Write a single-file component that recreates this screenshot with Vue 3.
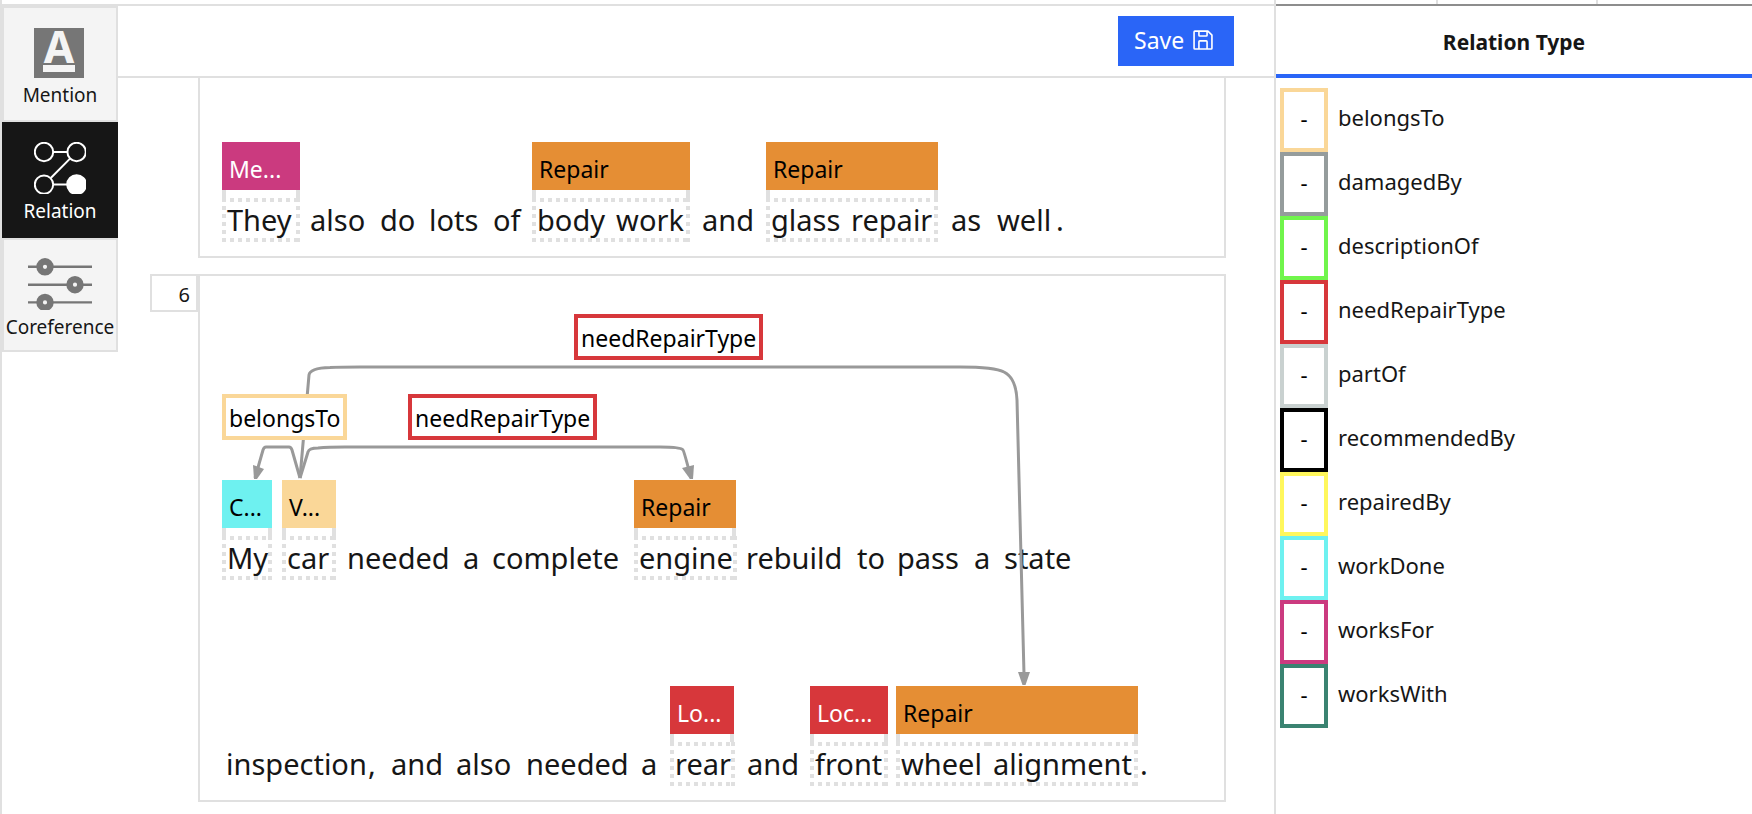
<script setup>
import { ref } from 'vue'

const mode = ref('Relation')
const modes = ['Mention', 'Relation', 'Coreference']

const relationTypes = [
  { name: 'belongsTo', tone: 'peach' },
  { name: 'damagedBy', tone: 'slate' },
  { name: 'descriptionOf', tone: 'green' },
  { name: 'needRepairType', tone: 'red' },
  { name: 'partOf', tone: 'silver' },
  { name: 'recommendedBy', tone: 'black' },
  { name: 'repairedBy', tone: 'yellow' },
  { name: 'workDone', tone: 'cyan' },
  { name: 'worksFor', tone: 'magenta' },
  { name: 'worksWith', tone: 'teal' },
]

// pitch: distance to the next item; box: width of a mention's tag and outline
const sentences = [
  {
    id: 5,
    lines: [
      [
        { label: 'Me...', tone: 'magenta', box: 78, pitch: 84, words: ['They'] },
        { text: 'also', pitch: 70 },
        { text: 'do', pitch: 49 },
        { text: 'lots', pitch: 64 },
        { text: 'of', pitch: 43 },
        { label: 'Repair', tone: 'orange', box: 158, pitch: 166, words: ['body', 'work'] },
        { text: 'and', pitch: 68 },
        { label: 'Repair', tone: 'orange', box: 172, pitch: 181, words: ['glass', 'repair'] },
        { text: 'as', pitch: 46 },
        { text: 'well', pitch: 59 },
        { text: '.', pitch: 16 },
      ],
    ],
  },
  {
    id: 6,
    lines: [
      [
        { label: 'C...', tone: 'cyan', box: 50, pitch: 60, words: ['My'] },
        { label: 'V...', tone: 'peach', box: 54, pitch: 61, words: ['car'] },
        { text: 'needed', pitch: 116 },
        { text: 'a', pitch: 29 },
        { text: 'complete', pitch: 146 },
        { label: 'Repair', tone: 'orange', box: 102, pitch: 108, words: ['engine'] },
        { text: 'rebuild', pitch: 111 },
        { text: 'to', pitch: 40 },
        { text: 'pass', pitch: 77 },
        { text: 'a', pitch: 30 },
        { text: 'state', pitch: 72 },
      ],
      [
        { text: 'inspection', pitch: 142 },
        { text: ',', pitch: 23 },
        { text: 'and', pitch: 65 },
        { text: 'also', pitch: 70 },
        { text: 'needed', pitch: 115 },
        { text: 'a', pitch: 33 },
        { label: 'Lo...', tone: 'red', box: 64, pitch: 73, words: ['rear'] },
        { text: 'and', pitch: 67 },
        { label: 'Loc...', tone: 'red', box: 78, pitch: 86, words: ['front'] },
        { label: 'Repair', tone: 'orange', box: 242, pitch: 240, words: ['wheel', 'alignment'] },
        { text: '.', pitch: 16 },
      ],
    ],
    relations: [
      { name: 'needRepairType', tone: 'red', x: 374, y: 38 },
      { name: 'belongsTo', tone: 'peach', x: 22, y: 118 },
      { name: 'needRepairType', tone: 'red', x: 208, y: 118 },
    ],
  },
]
</script>

<template>
  <div class="app">
    <nav class="modes" aria-label="Annotation mode">
      <button
        v-for="m in modes"
        :key="m"
        type="button"
        class="mode"
        :class="{ active: mode === m }"
        :aria-pressed="mode === m"
        @click="mode = m"
      >
        <span class="mode-icon">
          <svg v-if="m === 'Mention'" width="52" height="50" viewBox="0 0 52 50" aria-hidden="true">
            <rect width="50" height="50" fill="#767676" />
            <text class="letter" x="25" y="35" text-anchor="middle">A</text>
            <rect x="9" y="37" width="32" height="7" fill="#f4f4f4" />
          </svg>
          <svg v-else-if="m === 'Relation'" width="52" height="52" viewBox="0 0 52 52" fill="none" stroke="currentColor" stroke-width="2" aria-hidden="true">
            <circle cx="10" cy="10" r="9.2" />
            <circle cx="42.6" cy="10" r="9.2" />
            <circle cx="10" cy="42.6" r="9.2" />
            <circle cx="42.6" cy="42.6" r="9.4" fill="currentColor" />
            <path d="M19 10h14M19 42.6h14M36 16.6L17 35.8" />
          </svg>
          <svg v-else width="64" height="52" viewBox="0 0 64 52" fill="none" stroke="#767676" aria-hidden="true">
            <path stroke-width="2.4" d="M0 8.8h64M0 26.7h64M0 44.4h64" />
            <g stroke-width="6.6" fill="#f4f4f4">
              <circle cx="17" cy="8.8" r="5.4" />
              <circle cx="47" cy="26.7" r="5.4" />
              <circle cx="17" cy="44.4" r="5.4" />
            </g>
          </svg>
        </span>
        <span class="mode-name">{{ m }}</span>
      </button>
    </nav>

    <main class="editor">
      <header class="toolbar">
        <button type="button" class="save">
          <span>Save</span>
          <svg width="26" height="26" viewBox="0 0 32 32" fill="currentColor" aria-hidden="true">
            <path d="M27.71 9.29l-5-5A1 1 0 0 0 22 4H6a2 2 0 0 0-2 2v20a2 2 0 0 0 2 2h20a2 2 0 0 0 2-2V10a1 1 0 0 0-.29-.71ZM12 6h8v4h-8Zm8 20h-8v-8h8Zm2 0v-8a2 2 0 0 0-2-2h-8a2 2 0 0 0-2 2v8H6V6h4v4a2 2 0 0 0 2 2h8a2 2 0 0 0 2-2V6.41l4 4V26Z" />
          </svg>
        </button>
      </header>

      <section v-for="s in sentences" :key="s.id" class="sentence" :class="{ related: s.relations }">
        <div class="gutter"><span v-if="s.relations" class="number">{{ s.id }}</span></div>
        <div class="card">
          <div v-for="(line, li) in s.lines" :key="li" class="line">
            <div v-for="(item, i) in line" :key="i" class="item" :style="{ width: item.pitch + 'px' }">
              <div v-if="item.words" class="mention" :style="{ width: item.box + 'px' }">
                <div class="tag" :class="item.tone">{{ item.label }}</div>
                <div class="stems"></div>
                <div class="words">
                  <span v-for="w in item.words" :key="w" class="word">{{ w }}</span>
                </div>
              </div>
              <span v-else class="token">{{ item.text }}</span>
            </div>
          </div>

          <template v-if="s.relations">
            <svg class="links" aria-hidden="true">
              <g fill="none" stroke="#999" stroke-width="3">
                <path d="M100 202L109 99Q110 92 130 91.500Q140 91 160 91H760Q795 91 804 96Q816 102 817 124L824 398" />
                <path d="M100 202L108 176Q109 172 118 172Q128 171 145 171H460Q481 171 483 174Q484 175 491 202" />
                <path d="M100 202L92 174Q91 171 89 171H66Q64 171 63 174L55 202" />
              </g>
              <g fill="#999">
                <path d="M818 396H830L825.500 409H822.500Z" />
                <path d="M482 192L494 189L493 203H490Z" />
                <path d="M53 189L64 193L57 203H54Z" />
              </g>
            </svg>
            <div
              v-for="(r, i) in s.relations"
              :key="i"
              class="relation"
              :class="'edge-' + r.tone"
              :style="{ left: r.x + 'px', top: r.y + 'px' }"
            >{{ r.name }}</div>
          </template>
        </div>
      </section>
    </main>

    <aside class="panel">
      <div class="panel-top"><i></i><i></i><i></i></div>
      <h2 class="panel-title">Relation Type</h2>
      <ul class="types">
        <li v-for="t in relationTypes" :key="t.name">
          <button type="button" class="type">
            <span class="key" :class="'edge-' + t.tone">-</span>
            <span class="type-name">{{ t.name }}</span>
          </button>
        </li>
      </ul>
    </aside>
  </div>
</template>

<style>
body {
  margin: 0;
  background: #fff;
}
</style>

<style scoped>
.app {
  display: flex;
  box-sizing: border-box;
  min-height: 100vh;
  border-left: 2px solid #e0e0e0;
  background: #fff;
  color: #161616;
  font-family: "Noto Sans", "Open Sans", sans-serif;
  font-size: 22px;
  overflow: hidden;
}

.app * {
  box-sizing: border-box;
}

button {
  margin: 0;
  font: inherit;
  color: inherit;
  cursor: pointer;
}

/* Mode switcher */
.modes {
  display: flex;
  flex-direction: column;
  flex: none;
  width: 116px;
  margin-top: 4px;
  border-top: 2px solid #e0e0e0;
}

.mode {
  display: flex;
  flex-direction: column;
  align-items: center;
  height: 116px;
  padding: 18px 0 0;
  border: 2px solid #e0e0e0;
  background: #f4f4f4;
}

.mode:first-child {
  padding-top: 20px;
}

.mode:last-child {
  height: 114px;
}

.mode.active {
  border-color: #161616;
  background: #161616;
  color: #fff;
}

.mode-icon {
  display: block;
  height: 52px;
}

.mode:first-child .mode-icon {
  height: 50px;
}

.mode-icon svg {
  display: block;
}

.mode:first-child svg {
  overflow: visible;
}

.letter {
  fill: #f4f4f4;
  font-size: 44px;
  font-weight: 700;
}

.mode-name {
  font-size: 19px;
  line-height: 34px;
}

/* Editor */
.editor {
  flex: 1;
  min-width: 0;
  margin-top: 4px;
  border-top: 2px solid #e0e0e0;
}

.toolbar {
  display: flex;
  align-items: center;
  justify-content: flex-end;
  height: 72px;
  padding-right: 40px;
  border-bottom: 2px solid #e0e0e0;
}

.save {
  display: flex;
  align-items: center;
  gap: 6px;
  width: 116px;
  height: 50px;
  padding: 0 16px 2px;
  border: 0;
  background: #2a65f7;
  color: #fff;
  font-size: 23px;
}

.save svg {
  flex: none;
}

.sentence {
  display: flex;
  padding: 0 48px 0 32px;
}

.sentence + .sentence {
  margin-top: 16px;
}

.gutter {
  flex: none;
  width: 48px;
}

.number {
  display: block;
  height: 38px;
  padding-right: 6px;
  border: 2px solid #e0e0e0;
  font-size: 20px;
  line-height: 38px;
  text-align: right;
}

.card {
  position: relative;
  flex: 1;
  min-width: 0;
  padding: 64px 0 14px 22px;
  border: 2px solid #e0e0e0;
  border-top: 0;
}

.related .card {
  padding-top: 204px;
  border-top: 2px solid #e0e0e0;
}

.line {
  display: flex;
  align-items: flex-end;
}

.line + .line {
  margin-top: 106px;
}

.item {
  flex: none;
}

.tag {
  height: 48px;
  padding: 6px 0 0 7px;
  color: #000;
  font-size: 23px;
  line-height: 42px;
  white-space: nowrap;
}

.stems {
  height: 8px;
  border: solid #e0e0e0;
  border-width: 0 4px;
}

.words {
  display: flex;
}

.word,
.token {
  display: block;
  height: 44px;
  padding: 4px;
  font-size: 29px;
  line-height: 36px;
  white-space: nowrap;
}

/* Square-dotted outline, shared by the words of one mention */
.word {
  --across: repeating-linear-gradient(90deg, #e0e0e0 0 4px, transparent 4px 8px);
  --down: repeating-linear-gradient(#e0e0e0 0 4px, transparent 4px 8px);
  flex: 1 0 auto;
  padding-left: 5px;
  background:
    var(--across) top / 100% 4px no-repeat,
    var(--across) bottom / 100% 4px no-repeat;
}

.word:first-child {
  background:
    var(--across) top / 100% 4px no-repeat,
    var(--across) bottom / 100% 4px no-repeat,
    var(--down) left / 4px 100% no-repeat;
}

.word:last-child {
  background:
    var(--across) top / 100% 4px no-repeat,
    var(--across) bottom / 100% 4px no-repeat,
    var(--down) right / 4px 100% no-repeat;
}

.word:only-child {
  background:
    var(--across) top / 100% 4px no-repeat,
    var(--across) bottom / 100% 4px no-repeat,
    var(--down) left / 4px 100% no-repeat,
    var(--down) right / 4px 100% no-repeat;
}

.links {
  position: absolute;
  inset: 0;
  width: 100%;
  height: 100%;
}

.relation {
  position: absolute;
  height: 46px;
  padding: 0 3px;
  border: 4px solid;
  background: #fff;
  color: #000;
  font-size: 23px;
  line-height: 40px;
  white-space: nowrap;
}

/* Relation types */
.panel {
  flex: none;
  width: 478px;
  border-left: 2px solid #e0e0e0;
}

.panel-top {
  display: flex;
  height: 6px;
  border-bottom: 2px solid #8d8d8d;
}

.panel-top i {
  flex: 0 0 160px;
}

.panel-top i + i {
  border-left: 2px solid #e0e0e0;
}

.panel-title {
  height: 72px;
  margin: 0;
  border-bottom: 4px solid #2a65f7;
  font-size: 21px;
  font-weight: 700;
  line-height: 72px;
  text-align: center;
}

.types {
  margin: 0;
  padding: 10px 4px;
  list-style: none;
}

.type {
  display: flex;
  gap: 10px;
  width: 100%;
  height: 64px;
  padding: 0;
  border: 0;
  background: none;
  text-align: left;
}

.key {
  width: 48px;
  height: 64px;
  border: 4px solid;
  color: #000;
  line-height: 52px;
  text-align: center;
}

.type-name {
  line-height: 58px;
}

/* Tones */
.orange { background: #e58e34; }
.peach { background: #fad798; }
.cyan { background: #6ef1f0; }
.magenta { background: #cb3a7f; color: #fff; }
.red { background: #d7373b; color: #fff; }

.edge-peach { border-color: #fad798; }
.edge-slate { border-color: #959c9c; }
.edge-green { border-color: #70f54c; }
.edge-red { border-color: #d7373b; }
.edge-silver { border-color: #c9d1d0; }
.edge-black { border-color: #000; }
.edge-yellow { border-color: #fff75c; }
.edge-cyan { border-color: #6ef1f0; }
.edge-magenta { border-color: #cb3a7f; }
.edge-teal { border-color: #3a8371; }
</style>
